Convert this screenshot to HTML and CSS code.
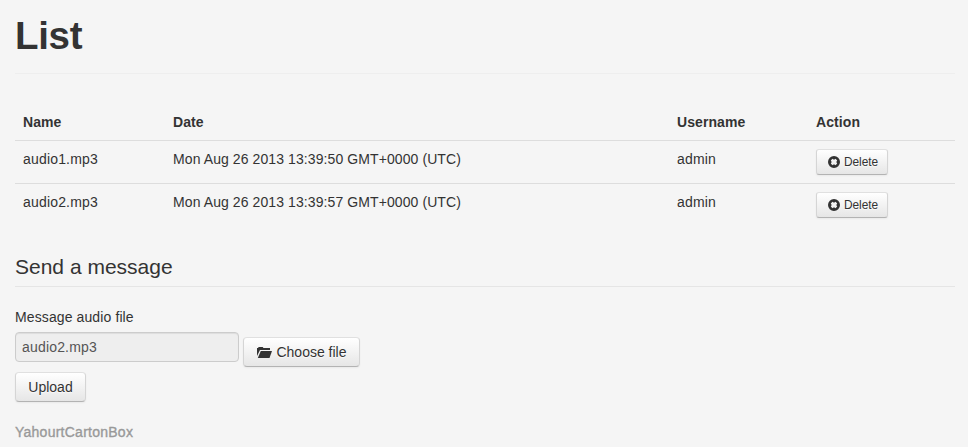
FILE: index.html
```html
<!DOCTYPE html>
<html lang="en">
<head>
<meta charset="utf-8">
<title>List</title>
<link rel="stylesheet" href="styles.css">
</head>
<body>
<svg class="sprite" width="0" height="0">
  <symbol id="remove" viewBox="0 0 14 14">
    <path fill-rule="evenodd" d="M7 1a6 6 0 1 1 0 12A6 6 0 0 1 7 1zM5.500 3.800L3.800 5.500L4.700 7L3.800 8.500L5.500 10.200L7 9.300L8.500 10.200L10.200 8.500L9.300 7L10.200 5.500L8.500 3.800L7 4.700z"/>
  </symbol>
  <symbol id="folder" viewBox="0 0 16 14">
    <path d="M0 11V3h1l.7-1h4l.8 1H13v2H3z"/>
    <path d="M3.800 6H15l-2.500 6.900H.8z"/>
  </symbol>
</svg>
<div class="container">
  <header class="page-header"><h1>List</h1></header>
  <table class="table">
    <thead>
      <tr><th class="name">Name</th><th class="date">Date</th><th class="user">Username</th><th>Action</th></tr>
    </thead>
    <tbody>
      <tr>
        <td class="file">audio1.mp3</td><td>Mon Aug 26 2013 13:39:50 GMT+0000 (UTC)</td><td class="file">admin</td>
        <td><button class="btn btn-small"><svg class="icon-remove"><use href="#remove"/></svg>Delete</button></td>
      </tr>
      <tr>
        <td class="file">audio2.mp3</td><td>Mon Aug 26 2013 13:39:57 GMT+0000 (UTC)</td><td class="file">admin</td>
        <td><button class="btn btn-small"><svg class="icon-remove"><use href="#remove"/></svg>Delete</button></td>
      </tr>
    </tbody>
  </table>
  <form>
    <h2 class="legend">Send a message</h2>
    <label for="file">Message audio file</label>
    <div class="file-row">
      <input id="file" type="text" value="audio2.mp3" disabled>
      <button type="button" class="btn btn-choose"><svg class="icon-folder"><use href="#folder"/></svg>Choose file</button>
    </div>
    <button type="button" class="btn btn-upload">Upload</button>
  </form>
  <footer>YahourtCartonBox</footer>
</div>
</body>
</html>
```
FILE: styles.css
```css
* { box-sizing: border-box; }
body {
  margin: 0;
  background: #f5f5f5;
  color: #333;
  font: 14px/20px "Liberation Sans", Arial, sans-serif;
}
.sprite { display: block; }
.container { width: 940px; margin-left: 15px; padding-top: 16px; }
.page-header { height: 58px; border-bottom: 1px solid #eee; margin-bottom: 30px; }
h1 { margin: 0; font-size: 38.5px; line-height: 40px; letter-spacing: -.3px; }
.table { width: 100%; table-layout: fixed; border-collapse: separate; border-spacing: 0; margin-bottom: 20px; }
th, td { padding: 8px; text-align: left; vertical-align: top; }
th { letter-spacing: .08px; }
td { height: 43px; border-top: 1px solid #ddd; letter-spacing: .09px; }
.file { letter-spacing: .18px; }
.name { width: 150px; }
.date { width: 504px; }
.user { width: 139px; }
.btn {
  display: flex;
  align-items: center;
  justify-content: center;
  height: 30px;
  padding: 0;
  border: 1px solid #ccc;
  border-color: #e0e0e0 #d5d5d5 #b3b3b3;
  border-radius: 4px;
  background: linear-gradient(#fff, #e6e6e6);
  box-shadow: inset 0 1px 0 rgba(255, 255, 255, .2), 0 1px 2px rgba(0, 0, 0, .05);
  color: #333;
  font: inherit;
  letter-spacing: normal;
  white-space: nowrap;
  text-shadow: 0 1px 1px rgba(255, 255, 255, .75);
}
.btn svg { fill: #333; flex: none; }
.btn-small { width: 72px; height: 26px; padding-left: 1px; font-size: 11.9px; border-radius: 3px; letter-spacing: -.08px; }
.icon-remove { width: 14px; height: 14px; margin-right: 3px; }
.icon-folder { width: 16px; height: 14px; margin-right: 3px; }
.btn-choose { width: 117px; margin-top: 5px; padding-left: 1px; }
.btn-upload { width: 71px; }
.legend { margin: 0 0 20px; padding-top: 1px; font-size: 21px; font-weight: 400; line-height: 39px; border-bottom: 1px solid #e5e5e5; }
label { display: block; margin-bottom: 5px; letter-spacing: .11px; }
.file-row { display: flex; gap: 4px; margin-bottom: 5px; }
input {
  width: 224px;
  height: 30px;
  padding: 4px 6px;
  border: 1px solid #ccc;
  border-radius: 4px;
  background: #eee;
  box-shadow: inset 0 1px 1px rgba(0, 0, 0, .075);
  color: #555;
  font: inherit;
  letter-spacing: .18px;
}
footer {
  margin-top: 20px;
  color: #999;
  letter-spacing: .25px;
  -webkit-text-stroke: .35px #999;
}
```
